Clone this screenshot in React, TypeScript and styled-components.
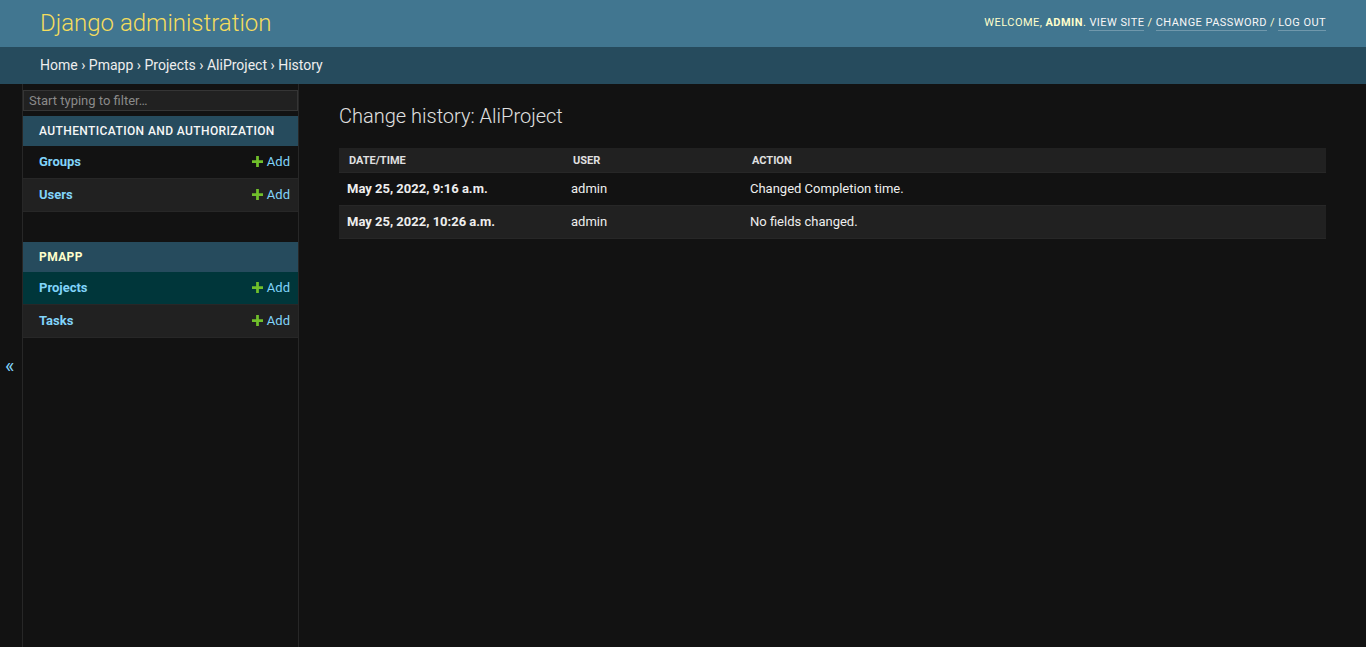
import React, { useState } from 'react';
import styled, { createGlobalStyle } from 'styled-components';

const GlobalStyle = createGlobalStyle`
  html, body {
    margin: 0;
    padding: 0;
    height: 100%;
    background: #121212;
    color: #eeeeee;
    font-family: Roboto, "Liberation Sans", Arial, sans-serif;
    font-size: 14px;
  }
  * { box-sizing: border-box; }
  a { text-decoration: none; }
`;

const Page = styled.div`
  display: flex;
  flex-direction: column;
  height: 100vh;
`;

const Header = styled.div`
  display: flex;
  justify-content: space-between;
  align-items: center;
  height: 47px;
  padding: 0 40px;
  background: #417690;
  color: #ffffcc;
`;

const Branding = styled.h1`
  margin: 0;
  font-size: 24px;
  font-weight: 300;
  color: #f5dd5d;
  line-height: 1;
  padding-bottom: 2px;
`;

const UserTools = styled.div`
  font-size: 11px;
  letter-spacing: 0.45px;
  text-transform: uppercase;
  color: #ffffcc;
  padding-bottom: 3px;

  strong {
    font-weight: 700;
  }
`;

const ToolLink = styled.a`
  color: #f7f7f7;
  border-bottom: 1px solid rgba(255, 255, 255, 0.25);
  padding-bottom: 1px;
`;

const Breadcrumbs = styled.div`
  height: 37px;
  display: flex;
  align-items: center;
  padding: 0 40px 1px;
  background: #264b5d;
  color: #eeeeee;
  font-size: 14px;

  a {
    color: #eeeeee;
  }
`;

const Main = styled.div`
  flex: 1;
  display: flex;
  min-height: 0;
`;

const ToggleNav = styled.button`
  flex: 0 0 23px;
  width: 23px;
  border: 0;
  border-right: 1px solid #272727;
  background: #121212;
  color: #81d4fa;
  font-size: 20px;
  padding: 0 0 0 5px;
  display: flex;
  align-items: center;
  font-family: Roboto, sans-serif;
  cursor: pointer;
`;

const Sidebar = styled.nav`
  flex: 0 0 276px;
  border-right: 1px solid #272727;
  background: #121212;
  overflow: auto;
`;

const Filter = styled.input`
  display: block;
  width: 100%;
  margin: 6px 0 5px;
  padding: 2px 5px;
  border: 1px solid #353535;
  background: #212121;
  color: #eeeeee;
  font-family: Roboto, sans-serif;
  font-size: 13px;
  line-height: 15px;

  &::placeholder {
    color: #8a8a8a;
  }
`;

const Module = styled.table`
  width: 100%;
  table-layout: fixed;
  border-collapse: collapse;
  margin-bottom: 30px;
`;

const Caption = styled.caption<{ $current?: boolean }>`
  background: #264b5d;
  color: ${p => (p.$current ? '#ffffcc' : '#f7f7f7')};
  text-align: left;
  white-space: nowrap;
  font-size: 12px;
  font-weight: ${p => (p.$current ? 700 : 500)};
  letter-spacing: 0.4px;
  text-transform: uppercase;
  padding: 7px 16px 7px;
  line-height: 16px;
`;

const ModelRow = styled.tr<{ $alt?: boolean; $current?: boolean }>`
  background: ${p => (p.$current ? '#00363a' : p.$alt ? '#212121' : '#121212')};

  th, td {
    border-bottom: 1px solid #272727;
    padding: 8px;
    font-size: 13px;
    line-height: 16px;
  }

  th {
    text-align: left;
    padding-left: 16px;
  }

  td {
    text-align: right;
    white-space: nowrap;
  }
`;

const ModelLink = styled.a`
  color: #81d4fa;
  font-weight: 700;
`;

const AddLink = styled.a`
  color: #81d4fa;

  svg {
    vertical-align: -1px;
    margin-right: 4px;
  }
`;

const Content = styled.div`
  flex: 1;
  padding: 20px 40px;
  overflow: auto;
`;

const Title = styled.h1`
  margin: 0 0 20px;
  font-size: 20px;
  font-weight: 300;
  color: #e0e0e0;
  line-height: 24px;
`;

const History = styled.table`
  width: 100%;
  border-collapse: collapse;
`;

const HeadCell = styled.th<{ $w?: string }>`
  width: ${p => p.$w || 'auto'};
  background: #212121;
  color: #e0e0e0;
  font-size: 11px;
  font-weight: 700;
  text-transform: uppercase;
  text-align: left;
  padding: 6px 10px 4px;
  line-height: 14px;
  border-bottom: 1px solid #272727;
`;

const HistoryRow = styled.tr<{ $alt?: boolean }>`
  background: ${p => (p.$alt ? '#212121' : '#121212')};

  th, td {
    font-size: 13px;
    line-height: 16px;
    padding: 8px;
    text-align: left;
    border-bottom: 1px solid #272727;
    color: #eeeeee;
  }

  th {
    font-weight: 700;
  }
`;

const PlusIcon = () => (
  <svg width="11" height="11" viewBox="0 0 12 12">
    <path d="M4.5 0h3v4.5H12v3H7.5V12h-3V7.5H0v-3h4.5z" fill="#70bf2b" />
  </svg>
);

const apps = [
  {
    name: 'Authentication and Authorization',
    current: false,
    models: [{ name: 'Groups' }, { name: 'Users' }],
  },
  {
    name: 'Pmapp',
    current: true,
    models: [{ name: 'Projects', current: true }, { name: 'Tasks' }],
  },
];

const entries = [
  { date: 'May 25, 2022, 9:16 a.m.', user: 'admin', action: 'Changed Completion time.' },
  { date: 'May 25, 2022, 10:26 a.m.', user: 'admin', action: 'No fields changed.' },
];

const App: React.FC = () => {
  const [filter, setFilter] = useState('');

  return (
    <Page>
      <GlobalStyle />
      <Header>
        <Branding>Django administration</Branding>
        <UserTools>
          Welcome, <strong>admin</strong>. <ToolLink href="#">View site</ToolLink> /{' '}
          <ToolLink href="#">Change password</ToolLink> / <ToolLink href="#">Log out</ToolLink>
        </UserTools>
      </Header>
      <Breadcrumbs>
        <a href="#">Home</a>&nbsp;›&nbsp;<a href="#">Pmapp</a>&nbsp;›&nbsp;<a href="#">Projects</a>
        &nbsp;›&nbsp;<a href="#">AliProject</a>&nbsp;›&nbsp;History
      </Breadcrumbs>
      <Main>
        <ToggleNav aria-label="Toggle navigation">«</ToggleNav>
        <Sidebar>
          <Filter
            placeholder="Start typing to filter…"
            value={filter}
            onChange={e => setFilter(e.target.value)}
          />
          {apps.map(app => (
            <Module key={app.name}>
              <Caption $current={app.current}>{app.name}</Caption>
              <tbody>
                {app.models
                  .filter(m => m.name.toLowerCase().includes(filter.toLowerCase()))
                  .map((m, i) => (
                    <ModelRow key={m.name} $alt={i % 2 === 1} $current={'current' in m && m.current}>
                      <th>
                        <ModelLink href="#">{m.name}</ModelLink>
                      </th>
                      <td>
                        <AddLink href="#">
                          <PlusIcon />
                          Add
                        </AddLink>
                      </td>
                    </ModelRow>
                  ))}
              </tbody>
            </Module>
          ))}
        </Sidebar>
        <Content>
          <Title>Change history: AliProject</Title>
          <History>
            <thead>
              <tr>
                <HeadCell $w="224px">Date/time</HeadCell>
                <HeadCell $w="179px">User</HeadCell>
                <HeadCell>Action</HeadCell>
              </tr>
            </thead>
            <tbody>
              {entries.map((e, i) => (
                <HistoryRow key={e.date} $alt={i % 2 === 1}>
                  <th>{e.date}</th>
                  <td>{e.user}</td>
                  <td>{e.action}</td>
                </HistoryRow>
              ))}
            </tbody>
          </History>
        </Content>
      </Main>
    </Page>
  );
};

export default App;
